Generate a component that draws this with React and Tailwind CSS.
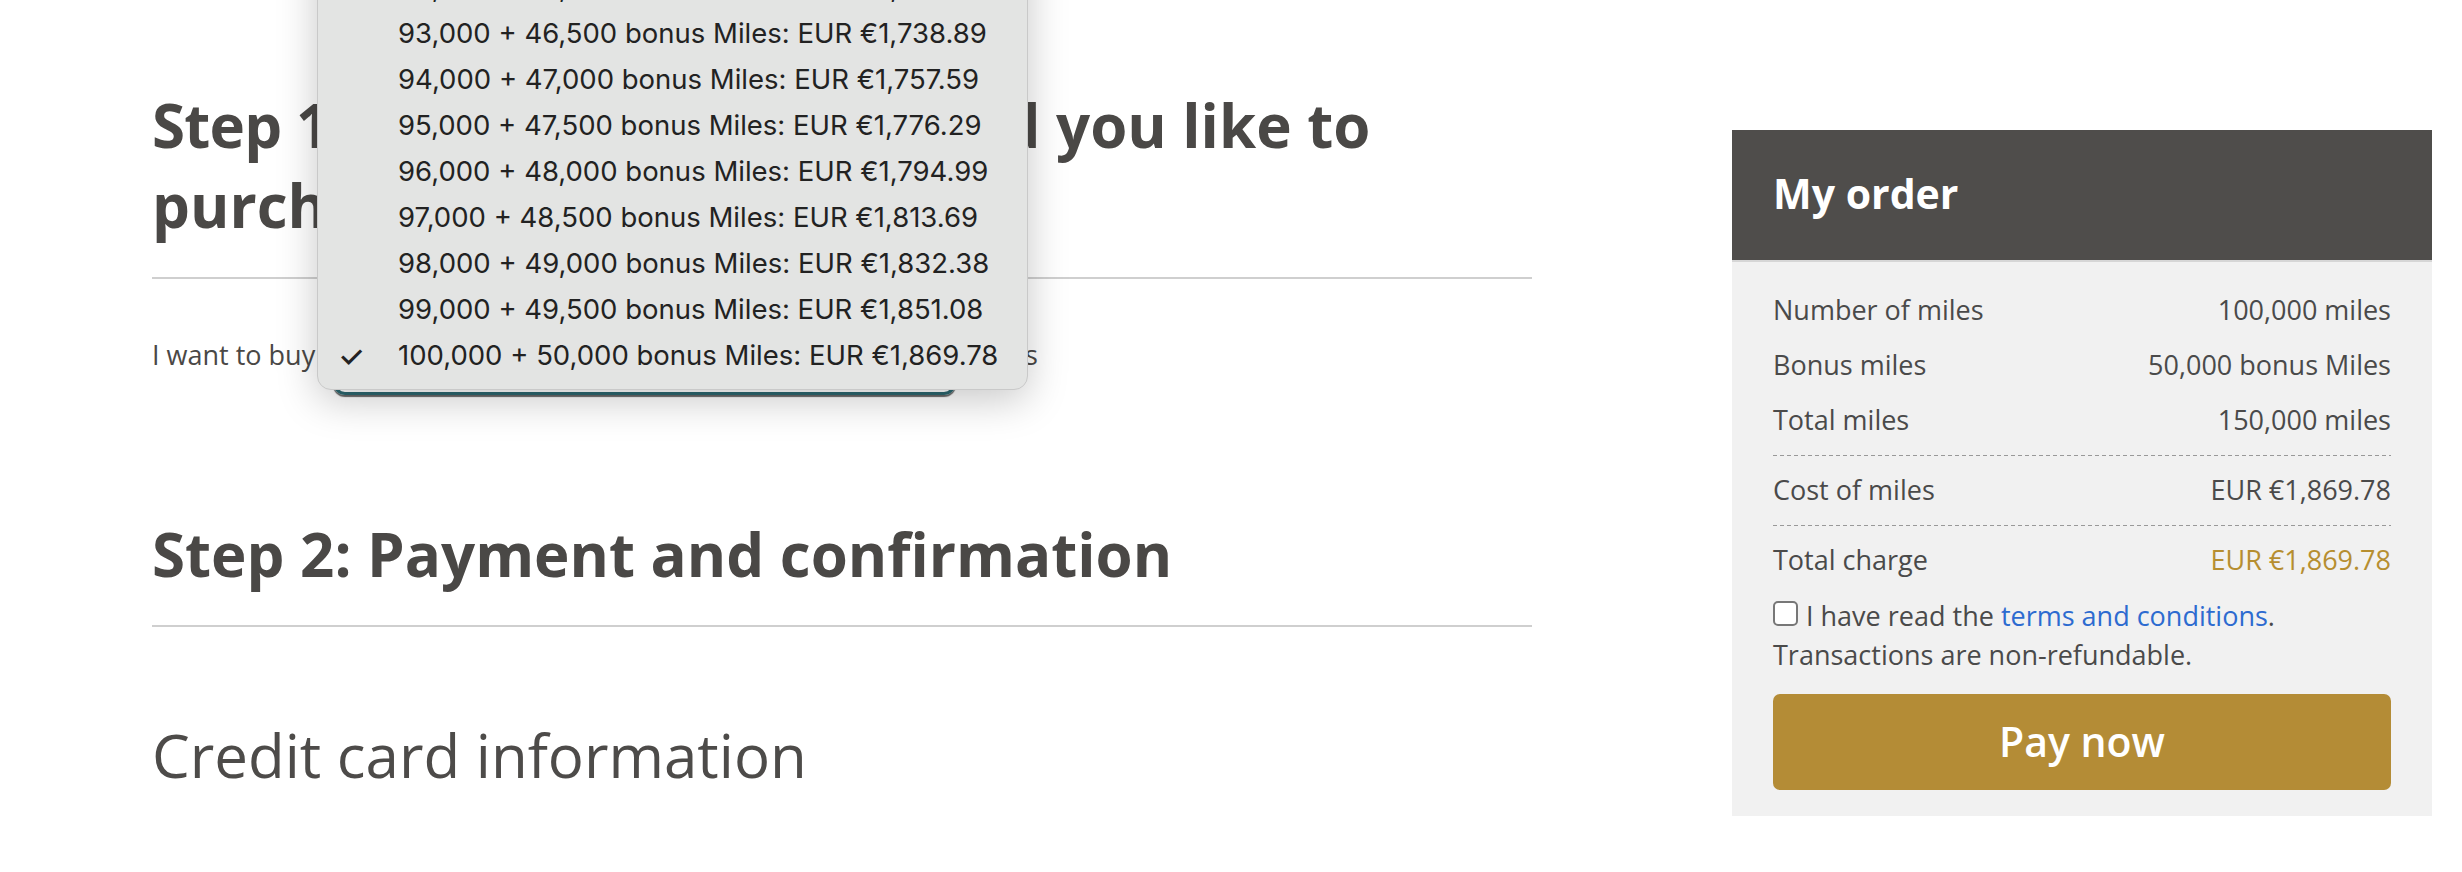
import React from "react";

const OPTIONS = [
  ["91,000", "45,500", "1,701.49"],
  ["92,000", "46,000", "1,720.19"],
  ["93,000", "46,500", "1,738.89"],
  ["94,000", "47,000", "1,757.59"],
  ["95,000", "47,500", "1,776.29"],
  ["96,000", "48,000", "1,794.99"],
  ["97,000", "48,500", "1,813.69"],
  ["98,000", "49,000", "1,832.38"],
  ["99,000", "49,500", "1,851.08"],
  ["100,000", "50,000", "1,869.78"],
];

const SELECTED = "100,000";

function OrderRow({ label, value, gold }) {
  return (
    <div className="h-[55px] flex items-center justify-between">
      <span>{label}</span>
      <span className={gold ? "text-[#b68e30]" : ""}>{value}</span>
    </div>
  );
}

function Dashed() {
  return <div className="mt-[7px] mb-[7px] h-px bg-[linear-gradient(to_right,#999_55%,transparent_55%)] bg-[length:7px_1px]" />;
}

export default function App() {
  return (
    <div className="relative w-[2462px] h-[872px] overflow-hidden bg-white flex font-['Open_Sans',sans-serif] text-[#4a4846]">
      {/* main column */}
      <main className="pl-[152px] w-[1532px] shrink-0">
        <h2 className="mt-[85px] text-[60px] leading-[80px] font-bold">
          <span className="tracking-[-0.8px]">Step 1: How many miles woul</span>d you like to purchase?
        </h2>
        <hr className="mt-[32px] border-0 h-[2px] bg-[#cfcfcf]" />

        <div className="mt-[36px] h-[80px] flex items-center text-[27px]">
          <span>I want to buy</span>
          <div className="ml-[18px] w-[623px] h-[80px] rounded-[12px] border-[3px] border-[#2d6870] shadow-[0_2px_1px_rgba(0,0,0,0.6)] flex items-center px-[20px] font-['Inter',sans-serif] text-[26px]">
            100,000 + 50,000 bonus Miles: EUR €1,869.78
          </div>
          <span className="ml-[15px]">miles</span>
        </div>

        <h2 className="mt-[119px] text-[60px] leading-[80px] font-bold">Step 2: Payment and confirmation</h2>
        <hr className="mt-[31px] border-0 h-[2px] bg-[#cfcfcf]" />

        <h3 className="mt-[88px] text-[60px] leading-[80px] font-normal text-[#4d4b49]">Credit card information</h3>
        <p className="mt-[69px] text-[27px] leading-[39px] text-[#8a8a8a]">
          Please fill in your credit card details below. All fields marked are mandatory.
        </p>
      </main>

      {/* order summary */}
      <aside className="ml-[200px] mt-[130px] w-[700px] self-start shrink-0">
        <div className="h-[132px] bg-[#4f4d4b] border-b-2 border-[#d6d6d6] flex items-center pb-[2px] px-[41px]">
          <h2 className="text-white text-[41px] font-bold">My order</h2>
        </div>
        <div className="bg-[#f1f1f1] px-[41px] pt-[21px] pb-[26px] text-[27px] text-[#4a4a4a]">
          <OrderRow label="Number of miles" value="100,000 miles" />
          <OrderRow label="Bonus miles" value="50,000 bonus Miles" />
          <OrderRow label="Total miles" value="150,000 miles" />
          <Dashed />
          <OrderRow label="Cost of miles" value="EUR €1,869.78" />
          <Dashed />
          <OrderRow label="Total charge" value="EUR €1,869.78" gold />
          <div className="mt-[8px] leading-[39px]">
            <label className="flex items-center gap-[8px]">
              <span className="w-[25px] h-[25px] rounded-[5px] border-2 border-[#777] bg-white shrink-0 -mt-[4px]" />
              <span>
                I have read the <a className="text-[#2d6bd0]">terms and conditions</a>.
              </span>
            </label>
            <p>Transactions are non-refundable.</p>
          </div>
          <button className="mt-[20px] w-full h-[96px] rounded-[7px] bg-[#b48c36] text-white text-[41px] font-semibold">
            Pay now
          </button>
        </div>
      </aside>

      {/* native select popup */}
      <div className="absolute left-[317px] top-[-82px] w-[711px] pb-[10px] rounded-[14px] bg-[#e3e4e3] border border-[#c9c9c9] shadow-[0_10px_40px_rgba(0,0,0,0.22)] font-['Inter',sans-serif] text-[27.5px] text-[#222]">
        {OPTIONS.map(([m, b, p]) => (
          <div key={m} className="h-[46px] flex items-center">
            <span className="w-[80px] pl-[20px] text-[30px] font-medium">{m === SELECTED ? "✓" : ""}</span>
            <span>
              {m} + {b} bonus Miles: EUR €{p}
            </span>
          </div>
        ))}
      </div>
    </div>
  );
}
